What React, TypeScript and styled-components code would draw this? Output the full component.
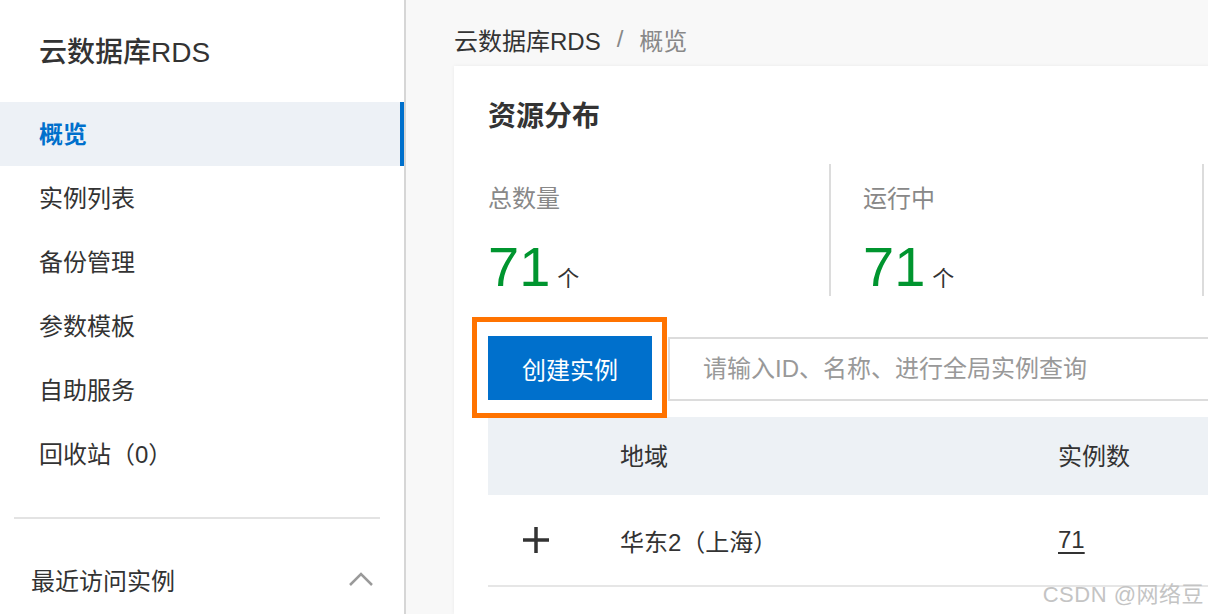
import styled, { createGlobalStyle } from "styled-components";

const GlobalStyle = createGlobalStyle`
  html, body {
    margin: 0;
    padding: 0;
  }
  body {
    font-family: "Liberation Sans", "Noto Sans CJK SC", sans-serif;
    color: #333;
    background: #f8f8f8;
  }
  * {
    box-sizing: border-box;
  }
`;

const Layout = styled.div`
  position: relative;
  display: flex;
  width: 1208px;
  height: 614px;
  overflow: hidden;
`;

// sidebar
const Sidebar = styled.aside`
  flex: 0 0 406px;
  display: flex;
  flex-direction: column;
  background: #fff;
  border-right: 2px solid #d6d6d6;
`;
const SideTitle = styled.h1`
  margin: 0;
  height: 102px;
  padding: 0 0 2px 39px;
  display: flex;
  align-items: center;
  font-size: 28px;
  font-weight: 500;
  color: #333;
`;
const NavItem = styled.div<{ $active?: boolean }>`
  height: 64px;
  padding: 0 0 4px 39px;
  display: flex;
  align-items: center;
  font-size: 24px;
  color: ${(p) => (p.$active ? "#0070cc" : "#333")};
  font-weight: ${(p) => (p.$active ? 600 : 400)};
  background: ${(p) => (p.$active ? "#edf1f6" : "transparent")};
  box-shadow: ${(p) => (p.$active ? "inset -4px 0 0 #0070cc" : "none")};
`;
const SideDivider = styled.div`
  height: 2px;
  margin: 31px 24px 0 14px;
  background: #e3e3e3;
`;
const RecentHeader = styled.div`
  height: 64px;
  margin-top: 29px;
  padding: 0 30px 2px 31px;
  display: flex;
  align-items: center;
  justify-content: space-between;
  font-size: 24px;
  color: #333;
`;

// main
const Main = styled.main`
  flex: 1;
  min-width: 0;
  padding-left: 48px;
  display: flex;
  flex-direction: column;
  overflow: hidden;
`;
const Breadcrumb = styled.nav`
  height: 66px;
  padding-top: 12px;
  display: flex;
  align-items: center;
  font-size: 24px;
  color: #333;
  span + span {
    margin-left: 16px;
  }
`;
const Crumb = styled.span<{ $muted?: boolean }>`
  color: ${(p) => (p.$muted ? "#888" : "#333")};
`;
const Card = styled.section`
  flex: 1 0 auto;
  width: 1200px;
  padding: 34px 0 0 34px;
  background: #fff;
  box-shadow: 0 0 4px rgba(0, 0, 0, 0.06);
`;
const CardTitle = styled.h2`
  margin: 0;
  font-size: 28px;
  line-height: 34px;
  font-weight: 600;
  color: #333;
`;
const Stats = styled.div`
  display: flex;
  margin-top: 30px;
`;
const Stat = styled.div<{ $first?: boolean }>`
  flex: none;
  height: 132px;
  width: ${(p) => (p.$first ? "341px" : "373px")};
  padding-left: ${(p) => (p.$first ? "0" : "32px")};
  border-left: ${(p) => (p.$first ? "none" : "2px solid #dcdcdc")};
`;
const StatLabel = styled.div`
  padding-top: 18px;
  font-size: 24px;
  line-height: 34px;
  color: #888;
`;
const StatValue = styled.div`
  margin-top: 23px;
  display: flex;
  align-items: baseline;
`;
const Number = styled.span`
  font-size: 56px;
  line-height: 56px;
  color: #00952f;
`;
const Unit = styled.span`
  margin-left: 7px;
  font-size: 22px;
  color: #333;
`;
const Actions = styled.div`
  display: flex;
  gap: 16px;
  margin-top: 40px;
`;
const CreateButton = styled.button`
  position: relative;
  flex: none;
  width: 164px;
  height: 64px;
  border: none;
  background: #0070cc;
  color: #fff;
  font-family: inherit;
  font-size: 24px;
  // annotation frame drawn around the button
  &::after {
    content: "";
    position: absolute;
    top: -19px;
    right: -15px;
    bottom: -18px;
    left: -16px;
    border: 5px solid #ff7300;
  }
`;
const SearchInput = styled.input`
  flex: 1;
  height: 64px;
  margin-top: 1px;
  padding-left: 33px;
  border: 2px solid #dcdcdc;
  border-right: none;
  outline: none;
  font-family: inherit;
  font-size: 24px;
  color: #333;
  &::placeholder {
    color: #999;
  }
`;
const Table = styled.div`
  margin-top: 16px;
`;
const Row = styled.div<{ $head?: boolean }>`
  display: grid;
  grid-template-columns: 132px 438px 1fr;
  align-items: center;
  height: ${(p) => (p.$head ? "78px" : "92px")};
  padding-bottom: ${(p) => (p.$head ? "4px" : "0")};
  background: ${(p) => (p.$head ? "#edf1f5" : "#fff")};
  border-bottom: ${(p) => (p.$head ? "none" : "2px solid #e6e6e6")};
  font-size: 24px;
  color: #333;
`;
const ExpandCell = styled.div`
  padding-left: 34px;
  display: flex;
  align-items: center;
`;
const LinkNum = styled.span`
  text-decoration: underline;
  text-underline-offset: 4px;
`;
const Watermark = styled.div`
  position: absolute;
  right: 4px;
  bottom: 6px;
  font-size: 22px;
  color: #c4c4c4;
  letter-spacing: 0.5px;
`;

const navItems = ["概览", "实例列表", "备份管理", "参数模板", "自助服务", "回收站（0）"];

function App() {
  return (
    <>
      <GlobalStyle />
      <Layout>
        <Sidebar>
          <SideTitle>云数据库RDS</SideTitle>
          {navItems.map((item, i) => (
            <NavItem key={item} $active={i === 0}>
              {item}
            </NavItem>
          ))}
          <SideDivider />
          <RecentHeader>
            最近访问实例
            <svg width="26" height="16" viewBox="0 0 26 16">
              <polyline points="2,14 13,3 24,14" fill="none" stroke="#9a9a9a" strokeWidth="2.5" />
            </svg>
          </RecentHeader>
        </Sidebar>
        <Main>
          <Breadcrumb>
            <Crumb>云数据库RDS</Crumb>
            <Crumb $muted>/</Crumb>
            <Crumb $muted>概览</Crumb>
          </Breadcrumb>
          <Card>
            <CardTitle>资源分布</CardTitle>
            <Stats>
              <Stat $first>
                <StatLabel>总数量</StatLabel>
                <StatValue>
                  <Number>71</Number>
                  <Unit>个</Unit>
                </StatValue>
              </Stat>
              <Stat>
                <StatLabel>运行中</StatLabel>
                <StatValue>
                  <Number>71</Number>
                  <Unit>个</Unit>
                </StatValue>
              </Stat>
              <Stat />
            </Stats>
            <Actions>
              <CreateButton>创建实例</CreateButton>
              <SearchInput placeholder="请输入ID、名称、进行全局实例查询" />
            </Actions>
            <Table>
              <Row $head>
                <div />
                <div>地域</div>
                <div>实例数</div>
              </Row>
              <Row>
                <ExpandCell>
                  <svg width="28" height="28" viewBox="0 0 28 28">
                    <path d="M14 1v26M1 14h26" stroke="#333" strokeWidth="3.5" />
                  </svg>
                </ExpandCell>
                <div>华东2（上海）</div>
                <div>
                  <LinkNum>71</LinkNum>
                </div>
              </Row>
            </Table>
          </Card>
        </Main>
        <Watermark>CSDN @网络豆</Watermark>
      </Layout>
    </>
  );
}

export default App;
